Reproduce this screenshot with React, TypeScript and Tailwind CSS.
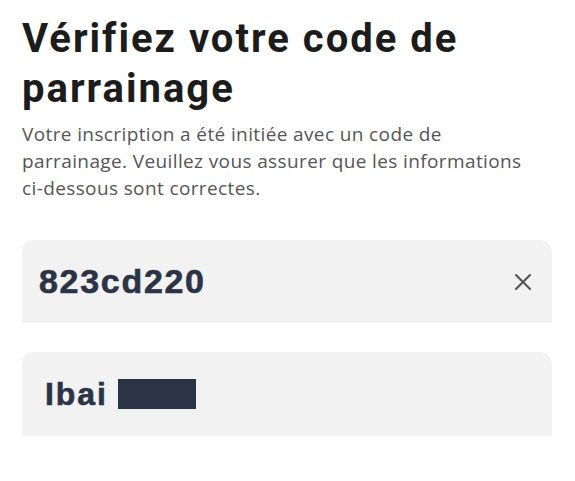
import { X } from "lucide-react"

export default function App() {
  return (
    <div className="min-h-screen bg-white px-[22px] pt-[14px]">
      <h1 className="font-['Roboto',sans-serif] text-[40px] font-bold leading-[50px] tracking-[0.05em] text-[#1c1c1c]">
        Vérifiez votre code de
        <br />
        parrainage
      </h1>
      <p className="mt-[7px] font-['Open_Sans',sans-serif] text-[19px] leading-[27px] tracking-[0.02em] text-[#555555]">
        Votre inscription a été initiée avec un code de
        <br />
        parrainage. Veuillez vous assurer que les informations
        <br />
        ci-dessous sont correctes.
      </p>

      <div className="mt-[38px] flex h-[83px] w-[530px] items-center justify-between rounded-t-[12px] bg-[#f2f2f2] pl-[17px] pr-[15px]">
        <span className="font-['Liberation_Sans',sans-serif] text-[34px] font-bold tracking-[0.05em] text-[#2b3447] [-webkit-text-stroke:0.6px_#2b3447]">
          823cd220
        </span>
        <X className="h-[28px] w-[28px] text-[#555555]" strokeWidth={1.8} />
      </div>

      <div className="mt-[29px] flex h-[84px] w-[530px] items-center rounded-t-[12px] bg-[#f2f2f2] pl-[23px]">
        <span className="font-['Liberation_Sans',sans-serif] text-[32px] font-bold tracking-[0.06em] text-[#2b3447] [-webkit-text-stroke:0.6px_#2b3447]">
          Ibai
        </span>
        <span className="ml-[10px] h-[30px] w-[78px] bg-[#2b3447]" />
      </div>
    </div>
  )
}
